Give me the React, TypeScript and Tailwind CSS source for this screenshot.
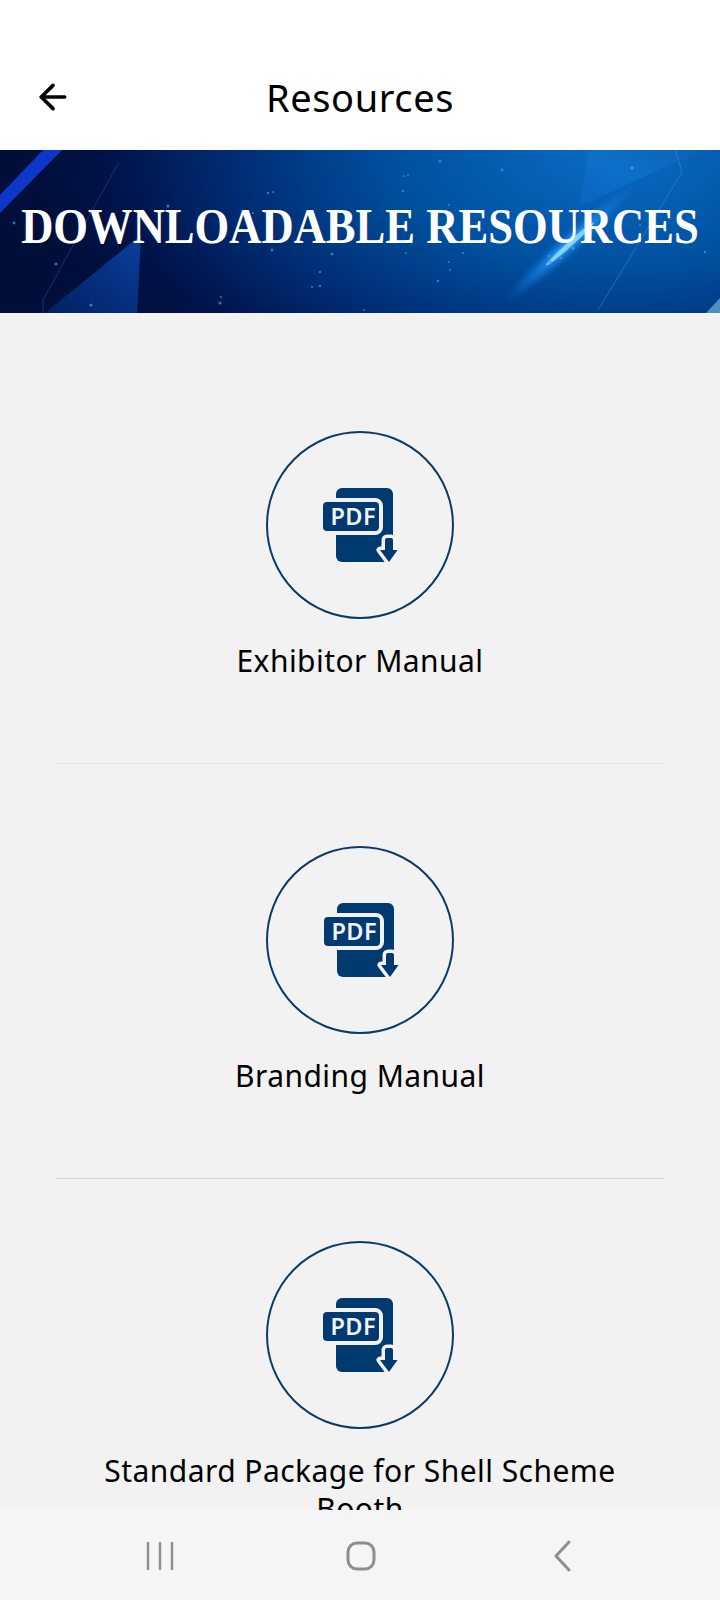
import { ArrowLeft } from "lucide-react";

const resources = [
  { title: "Exhibitor Manual", spacing: "pt-[118px]", line: "border-[#e2e2e2]", icon: "" },
  { title: "Branding Manual", spacing: "pt-[82px]", line: "border-[#d6d6d6]", icon: "translate-x-px" },
  { title: "Standard Package for Shell Scheme Booth", spacing: "pt-[62px]", line: "border-transparent", icon: "" },
];

const stars = [
  [440, 11, 1.5], [404, 26, 1], [408, 25, 1], [403, 41, 1.2], [268, 43, 1.2], [273, 42, 1], [632, 18, 2], [502, 20, 1.4],
  [168, 56, 1.5], [449, 55, 1], [253, 63, 1], [272, 100, 1.5], [332, 104, 1.5], [406, 103, 1], [463, 103, 1], [449, 112, 1],
  [320, 122, 1.2], [450, 120, 1], [312, 137, 1], [320, 136, 1.2], [438, 131, 1.2], [221, 147, 1], [91, 155, 1.6], [56, 114, 1.6],
  [14, 73, 1.4], [364, 160, 1], [549, 106, 1.5], [550, 112, 2], [561, 108, 1.4], [573, 98, 2], [705, 102, 1.2], [640, 75, 1], [220, 153, 1.5],
];

function PdfIcon() {
  return (
    <svg width="76" height="76" viewBox="0 0 76 76" className="block">
      <rect x="14" y="1" width="57" height="74" rx="6" fill="#003a70" />
      <rect x="-2" y="11" width="63" height="37" rx="8" fill="#f2f2f2" />
      <rect x="1" y="15" width="56" height="29" rx="4" fill="#003a70" />
      <path
        d="M65 51h4a2 2 0 0 1 2 2v10h4.5L67 75l-9-12h5V53a2 2 0 0 1 2-2z"
        fill="#f2f2f2"
        stroke="#f2f2f2"
        strokeWidth="7"
        strokeLinejoin="round"
      />
      <path d="M65 51h4a2 2 0 0 1 2 2v10h4.5L67 75l-9-12h5V53a2 2 0 0 1 2-2z" fill="#003a70" />
      <text x="8.5" y="38" fill="#f2f2f2" fontSize="23.5" fontWeight="600" fontFamily="'Noto Sans', sans-serif" letterSpacing="0.4">
        PDF
      </text>
    </svg>
  );
}

function BannerArt() {
  return (
    <svg viewBox="0 0 720 163" width="720" height="163" className="absolute inset-0">
      <defs>
        <linearGradient id="tri" x1="0" y1="1" x2="1" y2="0">
          <stop offset="0" stopColor="#02205f" />
          <stop offset="1" stopColor="#0a3f9e" />
        </linearGradient>
        <linearGradient id="facet" x1="0" y1="1" x2="1" y2="0">
          <stop offset="0" stopColor="#0a64bf" />
          <stop offset="0.5" stopColor="#0c70c8" />
          <stop offset="1" stopColor="#0a62b4" />
        </linearGradient>
        <radialGradient id="glow">
          <stop offset="0" stopColor="#4cc0ff" />
          <stop offset="0.45" stopColor="#1a86ea" stopOpacity="0.7" />
          <stop offset="1" stopColor="#0a6cd0" stopOpacity="0" />
        </radialGradient>
      </defs>
      <polygon points="45,163 141,85 137,163" fill="url(#tri)" />
      <polygon points="588,0 702,0 580,56" fill="url(#facet)" />
      <polygon points="43,0 62,0 0,63 0,45" fill="#0c37c8" />
      <ellipse cx="570" cy="93" rx="88" ry="12" fill="url(#glow)" transform="rotate(-42 570 93)" />
      <ellipse cx="570" cy="94" rx="32" ry="2.5" fill="#8fdcff" opacity="0.85" transform="rotate(-42 570 94)" />
      <path d="M119 12 43 150v13" stroke="#2a5ab0" strokeWidth="0.8" opacity="0.6" fill="none" />
      <path d="M675 0 682 22 598 160" stroke="#3a8ade" strokeWidth="0.8" opacity="0.7" fill="none" />
      <polygon points="706,163 720,148 720,163" fill="#4a90c0" />
      {stars.map(([x, y, r], i) => (
        <circle key={i} cx={x} cy={y} r={r} fill="#3f9fe0" opacity="0.7" />
      ))}
    </svg>
  );
}

export default function App() {
  return (
    <div className="w-[720px] h-[1600px] flex flex-col overflow-hidden bg-[#f2f2f2] font-['Noto_Sans',sans-serif] text-black">
      {/* Header */}
      <header className="h-[150px] shrink-0 bg-white relative flex items-center justify-center pt-[44px]">
        <ArrowLeft className="absolute left-[33px] top-[77px] w-[40px] h-[40px]" strokeWidth={2.2} />
        <h1 className="text-[38px] leading-none font-normal tracking-[0.6px]">Resources</h1>
      </header>

      {/* Banner */}
      <div className="h-[163px] shrink-0 relative overflow-hidden flex items-center justify-center pb-[10px] bg-[radial-gradient(ellipse_80%_190%_at_85%_0%,#0a6cc4_0%,#00509f_38%,#002a70_68%,#001248_88%,#000f3a_100%)]">
        <BannerArt />
        <h2 className="relative text-white text-[44.6px] font-bold leading-none whitespace-nowrap scale-y-[1.15] font-['Liberation_Serif',serif]">
          DOWNLOADABLE RESOURCES
        </h2>
      </div>

      {/* List */}
      <main className="flex-1 overflow-hidden px-[56px]">
        {resources.map((item) => (
          <div key={item.title} className={`flex flex-col items-center border-b ${item.line} ${item.spacing}`}>
            <div className="w-[188px] h-[188px] rounded-full border-2 border-[#0d3a66] flex items-center justify-center shrink-0">
              <div className={item.icon}>
                <PdfIcon />
              </div>
            </div>
            <p className="mt-[23px] mb-[83px] w-[540px] text-center text-[30px] leading-[38px] tracking-[0.45px]">{item.title}</p>
          </div>
        ))}
      </main>

      {/* Android nav */}
      <nav className="h-[90px] shrink-0 bg-[#f5f5f5] grid grid-cols-3 items-center justify-items-center px-[60px] pt-[2px]">
        <svg width="28" height="28" viewBox="0 0 28 28" fill="none" stroke="#8e8e8e" strokeWidth="2.4">
          <path d="M2 0v28M14 0v28M26 0v28" />
        </svg>
        <svg width="30" height="30" viewBox="0 0 30 30" fill="none" stroke="#8e8e8e" strokeWidth="3" className="ml-[2px]">
          <rect x="2" y="2" width="26" height="26" rx="9" />
        </svg>
        <svg width="20" height="32" viewBox="0 0 20 32" fill="none" stroke="#8e8e8e" strokeWidth="3" strokeLinecap="round" strokeLinejoin="round" className="ml-[4px]">
          <path d="M17 2 4 16l13 14" />
        </svg>
      </nav>
    </div>
  );
}
